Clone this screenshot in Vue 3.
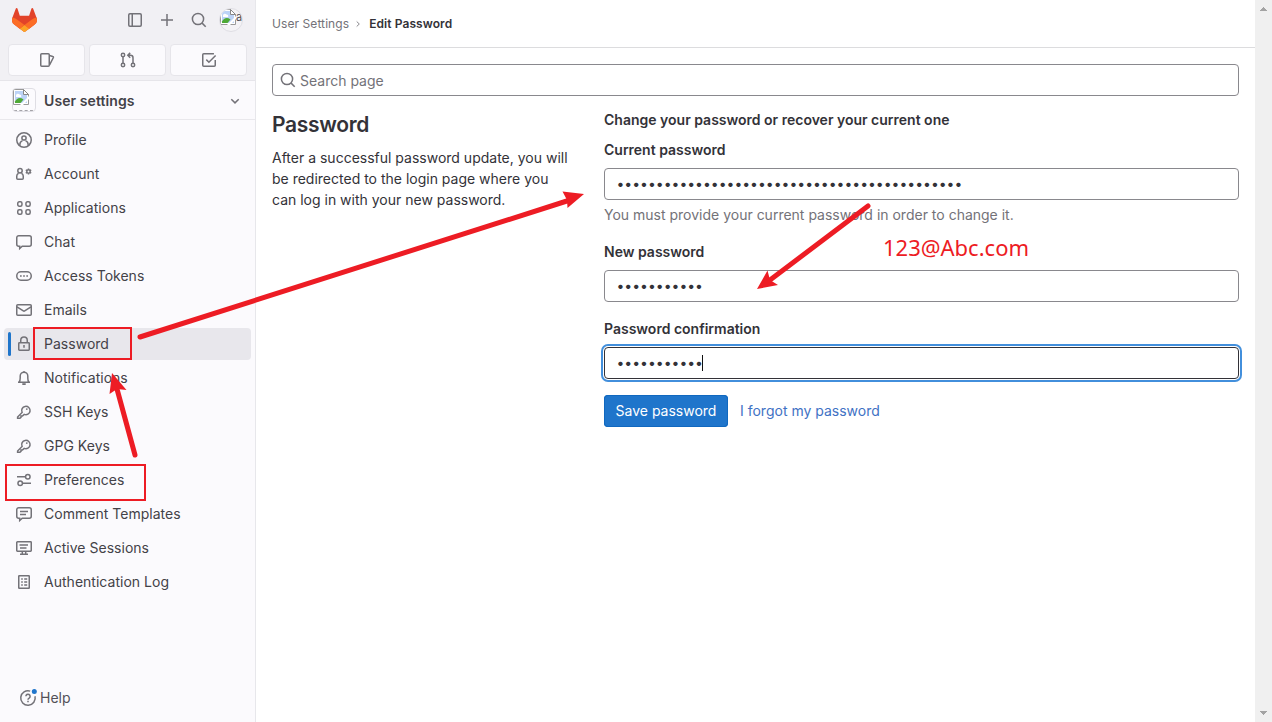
<script setup>
const items = [
  { label: 'Profile', icon: 'profile' },
  { label: 'Account', icon: 'account' },
  { label: 'Applications', icon: 'apps' },
  { label: 'Chat', icon: 'chat' },
  { label: 'Access Tokens', icon: 'token' },
  { label: 'Emails', icon: 'mail' },
  { label: 'Password', icon: 'lock', active: true },
  { label: 'Notifications', icon: 'bell' },
  { label: 'SSH Keys', icon: 'key' },
  { label: 'GPG Keys', icon: 'key' },
  { label: 'Preferences', icon: 'prefs' },
  { label: 'Comment Templates', icon: 'comment' },
  { label: 'Active Sessions', icon: 'monitor' },
  { label: 'Authentication Log', icon: 'log' },
]

const icons = {
  profile: '<circle cx="8" cy="8" r="7.25"/><circle cx="8" cy="6" r="2.1"/><path d="M3.9 13.4v-1.2A3.6 3.6 0 0 1 6.4 8.9M12.1 13.4v-1.2A3.6 3.6 0 0 0 9.6 8.9"/>',
  account: '<circle cx="4" cy="4.8" r="2.2"/><path d="M2.6 7.2A3.2 3.2 0 0 0 .75 10v2.2c0 .6.4 1 1 1h4.5c.6 0 1-.4 1-1V10a3.2 3.2 0 0 0-1.85-2.8"/><circle cx="12.5" cy="5.5" r="1.7"/><path d="M12.5 2.4v1.4M12.5 7.2v1.4M9.8 3.95 11 4.65M14 6.35l1.2.7M9.8 7.05 11 6.35M14 4.65l1.2-.7" stroke-width="1.5"/>',
  apps: '<rect x="1.75" y="1.75" width="4.2" height="4.4" rx="1.5"/><rect x="9.95" y="1.75" width="4.2" height="4.4" rx="1.5"/><rect x="1.75" y="9.85" width="4.2" height="4.4" rx="1.5"/><rect x="9.95" y="9.85" width="4.2" height="4.4" rx="1.5"/>',
  chat: '<path d="M2.75 1.75h10.5a2 2 0 0 1 2 2v6.5a2 2 0 0 1-2 2H6.2L3.7 14.6v-2.35h-.95a2 2 0 0 1-2-2v-6.5a2 2 0 0 1 2-2z"/>',
  token: '<rect x=".75" y="3.75" width="14.5" height="8.5" rx="4.2"/><path d="M4 8h1.7M7.15 8h1.7M10.3 8H12" stroke-width="1.7"/>',
  mail: '<rect x=".75" y="2.75" width="14.5" height="10.5" rx="1"/><path d="m1 4.8 6.3 4.1c.4.3 1 .3 1.4 0L15 4.8"/>',
  lock: '<rect x="2.75" y="6.75" width="10.5" height="7.5" rx=".7"/><path d="M4.75 6.5V4.2a3.25 3.25 0 0 1 6.5 0v2.3M8 9v2.8"/>',
  bell: '<path d="M2 12.25h12M3.2 12c.8-1.1 1-2 1-4V6a3.8 3.8 0 0 1 7.6 0v2c0 2 .2 2.9 1 4M8 1v1.1"/><path d="M6.3 14.1h3.4" stroke-width="1.8"/>',
  key: '<path d="M6.1 8.4a4.2 4.2 0 1 1 2.1 2L6.4 12.1H5v1.3l-1.1.9H1.6V13z"/><circle cx="10.8" cy="5.1" r=".9" fill="#737278" stroke="none"/>',
  prefs: '<path d="M1 4.75h8M6.8 11.25H15"/><circle cx="11.8" cy="4.75" r="2.25"/><circle cx="4.2" cy="11.25" r="2.25"/>',
  comment: '<path d="M2.75 1.75h10.5a2 2 0 0 1 2 2v6.5a2 2 0 0 1-2 2H6.2L3.7 14.6v-2.35h-.95a2 2 0 0 1-2-2v-6.5a2 2 0 0 1 2-2zM4 5.5h8M4 8.5h6"/>',
  monitor: '<rect x=".75" y="1.75" width="14.5" height="9.5" rx=".7"/><path d="M3.5 5H12M4 8h6.5M6.3 11.3v2.5M9.7 11.3v2.5M4 14.2h8"/>',
  log: '<rect x="2.75" y="1.75" width="10.5" height="12.5" rx=".5"/><path d="M5.2 5h1.6M8.2 5h3M5.2 8h1.6M8.2 8h3M5.2 11h1.6M8.2 11h3"/>',
}
</script>

<template>
  <div class="page">
    <aside class="sidebar">
      <div class="top">
        <div class="brand-row">
          <svg class="logo" viewBox="0 0 25 24">
            <path fill="#e24329" d="m24.507 9.5-.034-.09L21.082.562a.896.896 0 0 0-1.694.091l-2.29 7.01H7.825L5.535.653a.898.898 0 0 0-1.694-.09L.451 9.411.416 9.5a6.297 6.297 0 0 0 2.09 7.278l.012.01.03.022 5.16 3.867 2.56 1.935 1.554 1.176a1.051 1.051 0 0 0 1.268 0l1.555-1.176 2.56-1.935 5.197-3.89.014-.01A6.297 6.297 0 0 0 24.507 9.5Z" />
            <path fill="#fc6d26" d="m24.507 9.5-.034-.09a11.44 11.44 0 0 0-4.56 2.051l-7.447 5.632 4.742 3.584 5.197-3.89.014-.01A6.297 6.297 0 0 0 24.507 9.5Z" />
            <path fill="#fca326" d="m7.707 20.677 2.56 1.935 1.555 1.176a1.051 1.051 0 0 0 1.268 0l1.555-1.176 2.56-1.935-4.743-3.584-4.755 3.584Z" />
            <path fill="#fc6d26" d="M5.01 11.461a11.43 11.43 0 0 0-4.56-2.05L.416 9.5a6.297 6.297 0 0 0 2.09 7.278l.012.01.03.022 5.16 3.867 4.745-3.584-7.444-5.632Z" />
          </svg>
          <div class="tools">
            <svg class="icon" viewBox="0 0 16 16"><rect x="1.75" y="1.75" width="12.5" height="12.5" rx="1.2" /><path d="M5.25 2v12" /></svg>
            <svg class="icon" viewBox="0 0 16 16"><path d="M8 2v12M2 8h12" /></svg>
            <svg class="icon" viewBox="0 0 16 16"><circle cx="7" cy="7" r="5.6" /><path d="m11.1 11.1 3.6 3.6" /></svg>
            <div class="avatar round">
              <svg class="broken" viewBox="0 0 16 16"><path fill="#fff" stroke="#999" d="M.5.5h10l5 5v10H.5z" /><path fill="#bcd3f7" d="M2 2h8l4 4v8H2z" /><path fill="#fff" d="M3 6.5a2 2 0 0 1 3.5-1A1.6 1.6 0 0 1 8 8H3z" /><path fill="#4ea936" d="M2 14v-1.5C4 9 7 8 10.5 10.5l-3 3.5z" /><path fill="#fff" d="m7 16 9-9v3l-6 6z" /><path fill="#fff" stroke="#888" d="M10.5.5v5h5z" /></svg>
              <span class="alt">a</span>
            </div>
          </div>
        </div>
        <div class="shortcuts">
          <div class="shortcut"><svg class="icon" viewBox="0 0 16 16"><rect x="1.75" y="1.75" width="8.5" height="12.5" rx="1" /><path d="m10.4 3.5 3.4.9c.5.1.8.6.6 1.1l-3.8 7.3" /></svg></div>
          <div class="shortcut"><svg class="icon" viewBox="0 0 16 16"><circle cx="3" cy="3" r="1.7" /><circle cx="3" cy="13" r="1.7" /><circle cx="13" cy="13" r="1.7" /><path d="M3 4.8v6.4M13 11.2V5.8c0-1.6-.9-2.5-2.5-2.5H8.2M10.2.9 7.8 3.3l2.4 2.4" /></svg></div>
          <div class="shortcut"><svg class="icon" viewBox="0 0 16 16"><path d="M14.25 8v5.2c0 .6-.4 1.05-1 1.05H2.75c-.6 0-1-.45-1-1.05V2.8c0-.6.4-1.05 1-1.05h10.2M5.3 7.6l2.6 2.6 6.7-6.7" /></svg></div>
        </div>
      </div>
      <div class="context">
        <div class="avatar">
          <svg class="broken" viewBox="0 0 16 16"><path fill="#fff" stroke="#999" d="M.5.5h10l5 5v10H.5z" /><path fill="#bcd3f7" d="M2 2h8l4 4v8H2z" /><path fill="#fff" d="M3 6.5a2 2 0 0 1 3.5-1A1.6 1.6 0 0 1 8 8H3z" /><path fill="#4ea936" d="M2 14v-1.5C4 9 7 8 10.5 10.5l-3 3.5z" /><path fill="#fff" d="m7 16 9-9v3l-6 6z" /><path fill="#fff" stroke="#888" d="M10.5.5v5h5z" /></svg>
          <span class="clipped"></span>
        </div>
        <span class="context-name">User settings</span>
        <svg class="icon chevron" viewBox="0 0 16 16"><path d="m4.3 6.3 3.7 3.6 3.7-3.6" /></svg>
      </div>
      <nav class="nav">
        <a v-for="item in items" :key="item.label" class="item" :class="{ active: item.active }">
          <svg class="icon" viewBox="0 0 16 16" v-html="icons[item.icon]"></svg>
          <span>{{ item.label }}</span>
        </a>
      </nav>
      <div class="help">
        <svg class="icon" viewBox="0 0 16 16"><path d="M10.2 1.1A7.25 7.25 0 1 0 15 6.2" /><path d="M5.9 6.3a2.1 2.1 0 1 1 3.2 1.8C8.3 8.55 8 8.9 8 9.7M8 10.8v1.4" /><circle cx="14.3" cy="1.6" r="2.5" fill="#1f75cb" stroke="none" /></svg>
        <span>Help</span>
      </div>
    </aside>

    <main class="main">
      <div class="crumbs">
        <span class="crumb">User Settings</span>
        <svg class="sep" viewBox="0 0 8 8"><path d="m2.7 1.5 2.6 2.5-2.6 2.5" /></svg>
        <span class="crumb current">Edit Password</span>
      </div>
      <div class="content">
        <div class="search">
          <svg class="icon" viewBox="0 0 16 16"><circle cx="7" cy="7" r="5.6" /><path d="m11.1 11.1 3.6 3.6" /></svg>
          <span>Search page</span>
        </div>
        <div class="columns">
          <section class="intro">
            <h1>Password</h1>
            <p>After a successful password update, you will<br>be redirected to the login page where you<br>can log in with your new password.</p>
          </section>
          <section class="form">
            <h2>Change your password or recover your current one</h2>
            <label class="l1">Current password</label>
            <div class="field"><i v-for="n in 44" :key="n">•</i></div>
            <p class="hint">You must provide your current password in order to change it.</p>
            <label class="l2">New password</label>
            <div class="field"><i v-for="n in 11" :key="n">•</i></div>
            <label class="l3">Password confirmation</label>
            <div class="field focused"><i v-for="n in 11" :key="n">•</i><b class="caret"></b></div>
            <div class="actions">
              <button class="save">Save password</button>
              <a class="forgot">I forgot my password</a>
            </div>
          </section>
        </div>
      </div>
    </main>

    <div class="scrollbar">
      <svg viewBox="0 0 7 4" shape-rendering="crispEdges"><path d="M0 4h7L3.5 0z" /></svg>
      <svg viewBox="0 0 7 4" shape-rendering="crispEdges"><path d="M0 0h7L3.5 4z" /></svg>
    </div>

    <svg class="marks" viewBox="0 0 1272 722">
      <g fill="none" stroke="#ed1c24" stroke-width="2">
        <rect x="34" y="328" width="97" height="31" />
        <rect x="6" y="465" width="139" height="35" />
      </g>
      <g stroke="#ed1c24" stroke-width="5" stroke-linecap="round">
        <path d="M140 337 570 200" />
        <path d="M135 455 117 389" />
        <path d="M868 206 770 280" />
      </g>
      <g fill="#ed1c24">
        <path d="M584 194 562.5 191.500 567 200 567.5 208z" />
        <path d="M112 373 109.5 394 117 389 126.5 390z" />
        <path d="M757 289 767.5 270.5 770 280 778 285z" />
      </g>
    </svg>
    <div class="note">123@Abc.com</div>
  </div>
</template>

<style>
body { margin: 0; overflow: hidden; }
</style>

<style scoped>
* { box-sizing: border-box; }
.page {
  position: relative;
  display: flex;
  width: 1272px;
  height: 722px;
  background: #fff;
  color: #333238;
  font: 14px/20px Inter, "Noto Sans", sans-serif;
}
h1, h2, p { margin: 0; }
.icon {
  flex: none;
  width: 16px;
  height: 16px;
  overflow: visible;
  fill: none;
  stroke: #737278;
  stroke-width: 1.5;
}
.sidebar {
  display: flex;
  flex-direction: column;
  flex: none;
  width: 256px;
  border-right: 1px solid #e7e7eb;
  background: #fbfafd;
}
.top { height: 81px; background: #f1f0f4; border-bottom: 1px solid #e6e5ea; }
.brand-row { display: flex; align-items: center; justify-content: space-between; height: 40px; padding: 0 12px; }
.logo { width: 25px; height: 24px; }
.tools { display: flex; align-items: center; gap: 16px; }
.tools .avatar { margin-left: -4px; }
.avatar {
  position: relative;
  display: flex;
  flex: none;
  width: 24px;
  height: 24px;
  overflow: hidden;
  border: 1px solid #dfdee4;
  border-radius: 4px;
  background: #fcfbfe;
}
.avatar.round { border-radius: 50%; background: #f4f3f6; }
.broken { flex: none; width: 16px; height: 16px; }
.alt { font-size: 11px; line-height: 16px; color: #535158; }
.clipped { position: absolute; left: 1px; right: 2px; bottom: 0; border-bottom: 1px dashed #a4a3a8; }
.shortcuts { display: flex; gap: 4px; padding: 4px 8px 0; }
.shortcut {
  display: flex;
  flex: 1;
  align-items: center;
  justify-content: center;
  height: 32px;
  border: 1px solid #e6e5ea;
  border-radius: 4px;
  background: #fbfafd;
}
.shortcut .icon { margin-left: 1px; }
.context { display: flex; align-items: center; height: 39px; padding: 0 12px; border-bottom: 1px solid #e9e8ec; }
.context-name { margin: 1px 0 0 8px; font-weight: 600; color: #434248; letter-spacing: .09px; }
.chevron { margin-top: 1px; margin-left: auto; }
.nav { display: flex; flex-direction: column; gap: 2px; padding: 4px; }
.item { position: relative; display: flex; align-items: center; gap: 12px; height: 32px; padding-left: 12px; border-radius: 4px; color: #434248; letter-spacing: .02px; }
.item.active { background: #e8e7ec; }
.item.active::before { content: ""; position: absolute; left: 4px; top: 4px; width: 3px; height: 24px; border-radius: 3px; background: #1f75cb; }
.help { display: flex; align-items: center; gap: 4px; height: 32px; margin: auto 0 8px; padding-left: 20px; color: #535158; }
.main { flex: 1; min-width: 0; }
.crumbs { display: flex; align-items: center; height: 48px; padding-left: 16px; border-bottom: 1px solid #dcdcde; font-size: 12px; letter-spacing: .08px; }
.crumb { color: #737278; }
.crumb.current { font-weight: 600; color: #333238; }
.sep { width: 8px; height: 8px; margin: 1px 7px 0 5px; fill: none; stroke: #89888d; stroke-width: 1; }
.content { padding: 16px 16px 0; }
.search { display: flex; align-items: center; gap: 4px; height: 32px; padding-left: 7px; border: 1px solid #89888d; border-radius: 4px; color: #737278; }
.search span { margin-top: 2px; }
.columns { display: flex; }
.intro { flex: none; width: 332px; }
h1 { margin-top: 16px; font-size: 21px; line-height: 26px; font-weight: 600; letter-spacing: -.3px; }
.intro p { margin-top: 9px; line-height: 21px; }
.form { flex: 1; }
h2 { margin-top: 14px; font-size: 14px; line-height: 20px; font-weight: 600; }
label { display: block; font-weight: 600; line-height: 20px; }
.l1 { margin: 10px 0 8px; }
.l2 { margin: 17px 0 8px; }
.l3 { margin: 17px 0 8px; }
.hint { margin-top: 5px; color: #737278; }
.field { display: flex; align-items: center; height: 32px; padding-left: 11.5px; border: 1px solid #89888d; border-radius: 4px; background: #fff; }
.field i { width: 7.87px; font-style: normal; text-align: center; }
.field.focused { border-color: #333238; box-shadow: 0 0 0 1px #fff, 0 0 0 3px #428fdc; }
.caret { width: 1px; height: 16px; margin-left: -.5px; background: #111; }
.actions { display: flex; align-items: center; gap: 12px; margin-top: 16px; }
.save { width: 124px; height: 32px; padding: 0; border: 0; border-radius: 4px; background: #1f75cb; box-shadow: inset 0 0 0 1px #1068bf; color: #fff; font: inherit; }
.forgot { color: #3f72c4; }
.scrollbar { display: flex; flex-direction: column; align-items: center; justify-content: space-between; flex: none; width: 17px; padding: 7px 0; background: #f0f0f0; }
.scrollbar svg { width: 7px; height: 4px; fill: #a3a3a3; }
.marks { position: absolute; inset: 0; width: 1272px; height: 722px; pointer-events: none; }
.note { position: absolute; left: 883px; top: 231px; color: #ed1c24; font: 22px/32px "Noto Sans", sans-serif; }
</style>
